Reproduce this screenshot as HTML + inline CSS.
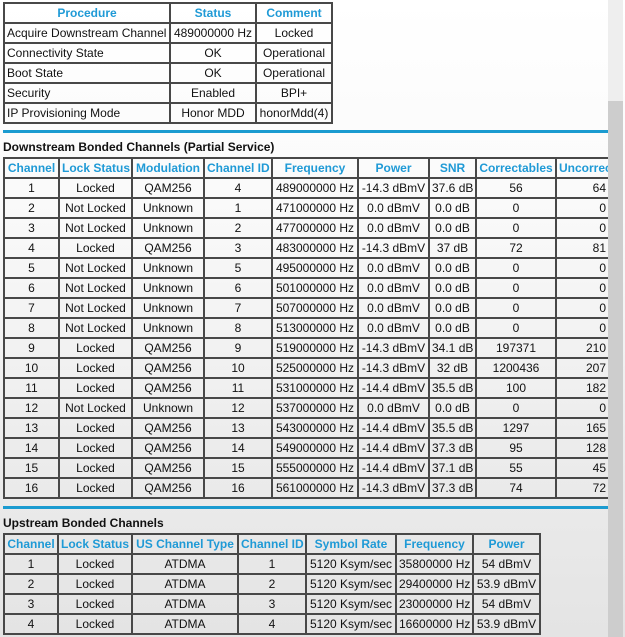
<!DOCTYPE html>
<html><head><meta charset="utf-8"><style>
body{margin:0;width:625px;height:637px;overflow:hidden;position:relative;background:linear-gradient(#fff 0px,#fafafa 200px,#ececec 450px,#e4e4e4 637px);font-family:"Liberation Sans",Arial,sans-serif;font-size:12px;color:#111}
table{border-collapse:collapse;table-layout:fixed;position:absolute;left:3px}
td,th{border:2px solid #484848;height:18px;padding:0 2px;line-height:18px;text-align:center;white-space:nowrap;overflow:hidden;font-weight:normal}
th{color:#1f9ad6;font-weight:bold}
.l{text-align:left}
.r{text-align:right}
.line{position:absolute;left:3px;width:605px;height:3px;background:#1b9bd0}
h4{position:absolute;left:3px;margin:0;font-size:12px;font-weight:bold;color:#111}
.sb{position:absolute;left:608px;top:0;width:15px;height:637px;background:#cdcdcd}
.sbt{position:absolute;left:608px;top:0;width:15px;height:101px;background:#eeeeee}
.wrap{position:absolute;left:0;top:157px;width:608px;height:345px;overflow:hidden}
</style></head><body>
<table style="top:2px;width:328px">
<colgroup><col style="width:166px"><col style="width:86px"><col style="width:76px"></colgroup>
<tr><th>Procedure</th><th>Status</th><th>Comment</th></tr>
<tr><td class="l">Acquire Downstream Channel</td><td>489000000 Hz</td><td>Locked</td></tr>
<tr><td class="l">Connectivity State</td><td>OK</td><td>Operational</td></tr>
<tr><td class="l">Boot State</td><td>OK</td><td>Operational</td></tr>
<tr><td class="l">Security</td><td>Enabled</td><td>BPI+</td></tr>
<tr><td class="l">IP Provisioning Mode</td><td>Honor MDD</td><td>honorMdd(4)</td></tr>
</table>
<div class="line" style="top:130px"></div>
<h4 style="top:140px">Downstream Bonded Channels (Partial Service)</h4>
<div class="wrap">
<table style="top:0;width:605px">
<colgroup><col style="width:55px"><col style="width:73px"><col style="width:72px"><col style="width:68px"><col style="width:86px"><col style="width:71px"><col style="width:47px"><col style="width:80px"><col style="width:53px"></colgroup>
<tr><th>Channel</th><th>Lock Status</th><th>Modulation</th><th>Channel ID</th><th>Frequency</th><th>Power</th><th>SNR</th><th>Correctables</th><th class="l" style="border-right:none">Uncorrectables</th></tr>
<tr><td>1</td><td>Locked</td><td>QAM256</td><td>4</td><td>489000000 Hz</td><td>-14.3 dBmV</td><td>37.6 dB</td><td>56</td><td class="r">64</td></tr>
<tr><td>2</td><td>Not Locked</td><td>Unknown</td><td>1</td><td>471000000 Hz</td><td>0.0 dBmV</td><td>0.0 dB</td><td>0</td><td class="r">0</td></tr>
<tr><td>3</td><td>Not Locked</td><td>Unknown</td><td>2</td><td>477000000 Hz</td><td>0.0 dBmV</td><td>0.0 dB</td><td>0</td><td class="r">0</td></tr>
<tr><td>4</td><td>Locked</td><td>QAM256</td><td>3</td><td>483000000 Hz</td><td>-14.3 dBmV</td><td>37 dB</td><td>72</td><td class="r">81</td></tr>
<tr><td>5</td><td>Not Locked</td><td>Unknown</td><td>5</td><td>495000000 Hz</td><td>0.0 dBmV</td><td>0.0 dB</td><td>0</td><td class="r">0</td></tr>
<tr><td>6</td><td>Not Locked</td><td>Unknown</td><td>6</td><td>501000000 Hz</td><td>0.0 dBmV</td><td>0.0 dB</td><td>0</td><td class="r">0</td></tr>
<tr><td>7</td><td>Not Locked</td><td>Unknown</td><td>7</td><td>507000000 Hz</td><td>0.0 dBmV</td><td>0.0 dB</td><td>0</td><td class="r">0</td></tr>
<tr><td>8</td><td>Not Locked</td><td>Unknown</td><td>8</td><td>513000000 Hz</td><td>0.0 dBmV</td><td>0.0 dB</td><td>0</td><td class="r">0</td></tr>
<tr><td>9</td><td>Locked</td><td>QAM256</td><td>9</td><td>519000000 Hz</td><td>-14.3 dBmV</td><td>34.1 dB</td><td>197371</td><td class="r">210</td></tr>
<tr><td>10</td><td>Locked</td><td>QAM256</td><td>10</td><td>525000000 Hz</td><td>-14.3 dBmV</td><td>32 dB</td><td>1200436</td><td class="r">207</td></tr>
<tr><td>11</td><td>Locked</td><td>QAM256</td><td>11</td><td>531000000 Hz</td><td>-14.4 dBmV</td><td>35.5 dB</td><td>100</td><td class="r">182</td></tr>
<tr><td>12</td><td>Not Locked</td><td>Unknown</td><td>12</td><td>537000000 Hz</td><td>0.0 dBmV</td><td>0.0 dB</td><td>0</td><td class="r">0</td></tr>
<tr><td>13</td><td>Locked</td><td>QAM256</td><td>13</td><td>543000000 Hz</td><td>-14.4 dBmV</td><td>35.5 dB</td><td>1297</td><td class="r">165</td></tr>
<tr><td>14</td><td>Locked</td><td>QAM256</td><td>14</td><td>549000000 Hz</td><td>-14.4 dBmV</td><td>37.3 dB</td><td>95</td><td class="r">128</td></tr>
<tr><td>15</td><td>Locked</td><td>QAM256</td><td>15</td><td>555000000 Hz</td><td>-14.4 dBmV</td><td>37.1 dB</td><td>55</td><td class="r">45</td></tr>
<tr><td>16</td><td>Locked</td><td>QAM256</td><td>16</td><td>561000000 Hz</td><td>-14.3 dBmV</td><td>37.3 dB</td><td>74</td><td class="r">72</td></tr>
</table>
</div>
<div class="line" style="top:506px"></div>
<h4 style="top:516px">Upstream Bonded Channels</h4>
<table style="top:533px;width:536px">
<colgroup><col style="width:54px"><col style="width:74px"><col style="width:106px"><col style="width:68px"><col style="width:90px"><col style="width:77px"><col style="width:67px"></colgroup>
<tr><th>Channel</th><th>Lock Status</th><th>US Channel Type</th><th>Channel ID</th><th>Symbol Rate</th><th>Frequency</th><th>Power</th></tr>
<tr><td>1</td><td>Locked</td><td>ATDMA</td><td>1</td><td>5120 Ksym/sec</td><td>35800000 Hz</td><td>54 dBmV</td></tr>
<tr><td>2</td><td>Locked</td><td>ATDMA</td><td>2</td><td>5120 Ksym/sec</td><td>29400000 Hz</td><td>53.9 dBmV</td></tr>
<tr><td>3</td><td>Locked</td><td>ATDMA</td><td>3</td><td>5120 Ksym/sec</td><td>23000000 Hz</td><td>54 dBmV</td></tr>
<tr><td>4</td><td>Locked</td><td>ATDMA</td><td>4</td><td>5120 Ksym/sec</td><td>16600000 Hz</td><td>53.9 dBmV</td></tr>
</table>
<div class="sb"></div><div class="sbt"></div>
</body></html>
